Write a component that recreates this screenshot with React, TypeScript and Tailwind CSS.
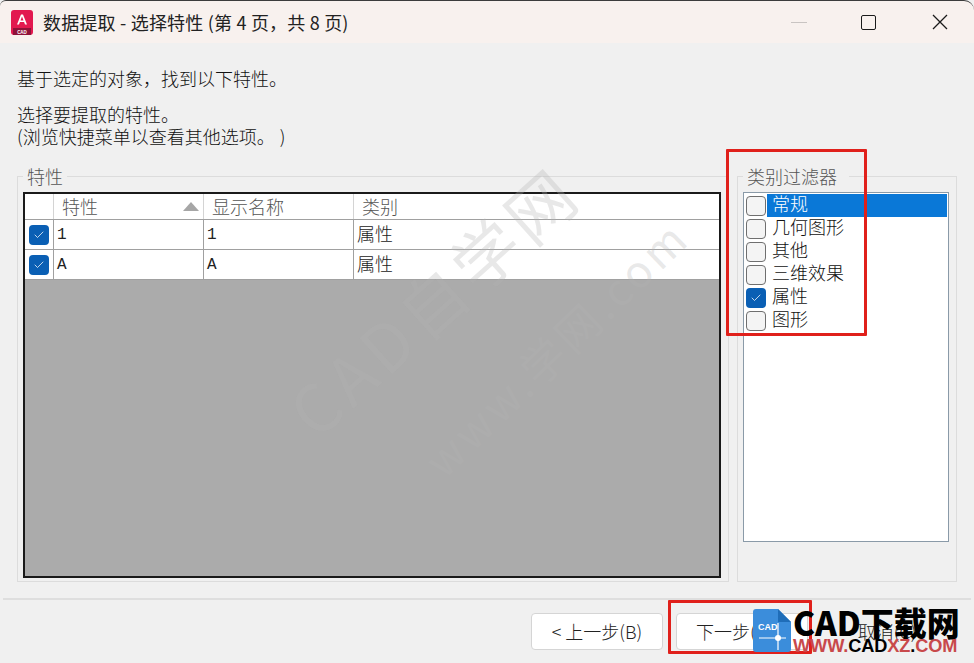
import { Check } from 'lucide-react';

const cjk = "font-['Noto_Sans_CJK_SC','Liberation_Sans',sans-serif]";
const monoCjk = "font-['Liberation_Mono','Noto_Sans_CJK_SC',monospace]";

const rows = [
  { name: '1', display: '1', kind: '属性' },
  { name: 'A', display: 'A', kind: '属性' },
];

const filters = [
  { label: '常规', checked: false, selected: true },
  { label: '几何图形', checked: false },
  { label: '其他', checked: false },
  { label: '三维效果', checked: false },
  { label: '属性', checked: true },
  { label: '图形', checked: false },
];

function CheckBox({ checked }: { checked: boolean }) {
  if (checked) {
    return (
      <span className="flex h-[20px] w-[20px] shrink-0 items-center justify-center rounded-[4px] bg-[#0a5fb4]">
        <Check className="h-[12px] w-[12px] text-white" strokeWidth={1.5} />
      </span>
    );
  }
  return <span className="block h-[20px] w-[20px] shrink-0 rounded-[4px] border border-[#6f6f6f] bg-[#f4f4f4]" />;
}

function GridRow({ name, display, kind }: { name: string; display: string; kind: string }) {
  return (
    <div className="flex h-[30px] border-b border-[#a0a0a0] bg-white text-[18px] text-[#222]">
      <div className="flex w-[29px] items-center justify-center border-r border-[#a0a0a0]">
        <CheckBox checked />
      </div>
      <div className={`flex w-[150px] items-center border-r border-[#a0a0a0] pl-[3px] text-[16px] ${monoCjk}`}>{name}</div>
      <div className={`flex w-[150px] items-center border-r border-[#a0a0a0] pl-[3px] text-[16px] ${monoCjk}`}>{display}</div>
      <div className={`flex flex-1 items-center pb-[3px] pl-[3px] ${cjk} font-light`}>{kind}</div>
    </div>
  );
}

function Watermark() {
  return (
    <div className={`pointer-events-none absolute inset-0 overflow-hidden ${cjk}`}>
      <div className="absolute left-[222px] top-[266px] w-[420px] -rotate-[42deg] whitespace-nowrap text-center text-[66px] leading-none tracking-[6px] text-[#b4b4b4]/30">
        CAD自学网
      </div>
      <div className="absolute left-[345px] top-[325px] w-[420px] -rotate-[44deg] whitespace-nowrap text-center text-[44px] leading-none tracking-[4px] text-[#b4b4b4]/30">
        www.学网.com
      </div>
    </div>
  );
}

function SiteLogo() {
  return (
    <div className="absolute left-[753px] top-[606px] flex h-[48px] w-[221px]">
      <svg width="38" height="43" viewBox="0 0 38 43" className="mt-[3px] shrink-0">
        <path d="M3 0H25L38 13V40a3 3 0 0 1-3 3H3a3 3 0 0 1-3-3V3a3 3 0 0 1 3-3z" fill="#3b8ddb" />
        <path d="M25 0L38 13H25z" fill="#1f6db8" />
        <path d="M6 29H33M25 14V41" stroke="#fff" strokeWidth="1.2" />
        <circle cx="25" cy="29" r="3" fill="#fff" />
        <text x="5" y="21" fontSize="9" fontWeight="700" fill="#fff" fontFamily="Liberation Sans, sans-serif">CAD</text>
      </svg>
      <div className="ml-[2px] flex flex-col">
        <div className={`h-[32px] whitespace-nowrap text-[33px] font-black leading-[32px] text-black ${cjk}`}>CAD下载网</div>
        <div className="whitespace-nowrap font-['Liberation_Sans',sans-serif] text-[18.2px] font-bold leading-[16px] tracking-[-0.1px]">
          <span className="text-[#c8494b]">WWW.</span>
          <span className="text-black">CAD</span>
          <span className="text-[#c8494b]">XZ</span>
          <span className="text-black">.</span>
          <span className="text-[#c8494b]">COM</span>
        </div>
      </div>
    </div>
  );
}

export default function App() {
  return (
    <div className={`relative flex h-[663px] w-[974px] flex-col overflow-hidden bg-[#f0f0f0] [text-spacing-trim:space-all] ${cjk}`}>
      <div className="flex h-[43px] shrink-0 items-center rounded-tl-[6px] rounded-tr-[10px] border-t border-[#3c3c3c] bg-[#f8f1ee] pl-[11px]">
        <svg width="22" height="25" viewBox="0 0 22 25" className="shrink-0">
          <rect x="0" y="0" width="22" height="25" rx="3" fill="#e2184f" />
          <rect x="2" y="18" width="18" height="7" fill="#8f1239" />
          <path d="M6 14.5L10 4.5h2l4 10h-2l-.9-2.4H8.9L8 14.5zM9.5 10.5h3L11 6.6z" fill="#fff" />
          <text x="11" y="23.6" textAnchor="middle" fontSize="4.5" fontWeight="700" fill="#fff" fontFamily="Liberation Sans, sans-serif">CAD</text>
        </svg>
        <span className="ml-[10px] text-[18px] leading-none tracking-[0.2px] text-[#222]">数据提取 - 选择特性 (第 4 页，共 8 页)</span>
        <div className="ml-auto flex items-center">
          <span className="mr-[54px] h-px w-[16px] bg-[#c9c4c2]" />
          <span className="mr-[56px] h-[15px] w-[15px] rounded-[2px] border-[1.5px] border-[#1a1a1a]" />
          <svg width="16" height="16" viewBox="0 0 16 16" className="mr-[26px]">
            <path d="M1 1L15 15M15 1L1 15" stroke="#1a1a1a" strokeWidth="1.3" />
          </svg>
        </div>
      </div>

      <div className="flex flex-1 flex-col px-[17px] pt-[24px] text-[18px] font-light leading-[22px] text-[#111]">
        <p>基于选定的对象，找到以下特性。</p>
        <p className="mt-[14px]">选择要提取的特性。</p>
        <p>(浏览快捷菜单以查看其他选项。<span className="ml-[5px]">)</span></p>

        <div className="mt-[19px] flex h-[416px] gap-[8px]">
          <fieldset className="flex w-[712px] flex-col border border-[#dcdcdc] pb-[3px] pl-[5px] pr-[7px] pt-[6px]">
            <legend className="px-[4px] text-[18px] leading-[20px] text-[#555]">特性</legend>
            <div className="flex flex-1 flex-col border-2 border-[#1a1a1a] bg-[#ababab]">
              <div className="flex h-[26px] border-b border-[#a0a0a0] bg-white text-[18px] text-[#555]">
                <div className="w-[29px] border-r border-[#d4d4d4]" />
                <div className="flex w-[150px] items-center justify-between border-r border-[#d4d4d4] pb-[2px] pl-[8px] pr-[4px]">
                  <span>特性</span>
                  <span className="mt-[2px] h-0 w-0 border-x-[8px] border-b-[9px] border-x-transparent border-b-[#a6a6a6]" />
                </div>
                <div className="flex w-[150px] items-center border-r border-[#d4d4d4] pb-[2px] pl-[8px]">显示名称</div>
                <div className="flex flex-1 items-center pb-[2px] pl-[8px]">类别</div>
              </div>
              {rows.map((row) => (
                <GridRow key={row.name} {...row} />
              ))}
            </div>
          </fieldset>

          <fieldset className="flex w-[220px] flex-col border border-[#dcdcdc] pb-[39px] pl-[5px] pr-[7px] pt-[6px]">
            <legend className="pl-[4px] pr-[12px] text-[18px] leading-[20px] text-[#555]">类别过滤器</legend>
            <div className="flex flex-1 flex-col border border-[#8a9aa8] bg-white pl-[2px] pr-[1px] pt-[1px]">
              {filters.map((f) => (
                <div key={f.label} className="flex h-[23px] items-center">
                  <CheckBox checked={f.checked} />
                  <span
                    className={`ml-[1px] flex h-[23px] flex-1 items-center pb-[5px] pl-[5px] text-[18px] ${
                      f.selected ? 'bg-[#0a78d7] text-white' : 'text-[#111]'
                    }`}
                  >
                    {f.label}
                  </span>
                </div>
              ))}
            </div>
          </fieldset>
        </div>
      </div>

      <div className="mx-[3px] flex h-[65px] shrink-0 items-start gap-[13px] border-t-2 border-[#dedede] pl-[528px] pt-[13px]">
        <button className="h-[37px] w-[132px] rounded-[4px] border border-[#d5d5d5] bg-white text-[18px] font-light text-[#222]">
          &lt; 上一步(B)
        </button>
        <button className="h-[37px] w-[132px] rounded-[4px] border border-[#d5d5d5] bg-white pl-[19px] text-left text-[18px] font-light text-[#222]">
          下一步(N) &gt;
        </button>
        <button className="h-[37px] w-[132px] rounded-[4px] text-[18px] font-light text-[#222]">取消(C)</button>
      </div>

      <Watermark />

      {/* annotations drawn over the dialog */}
      <div className="pointer-events-none absolute left-[726px] top-[149px] h-[187px] w-[141px] rounded-[1px] border-[3px] border-[#e0201b]" />
      <div className="pointer-events-none absolute left-[668px] top-[600px] h-[54px] w-[144px] rounded-[1px] border-[3px] border-[#e0201b]" />
      <SiteLogo />
    </div>
  );
}
